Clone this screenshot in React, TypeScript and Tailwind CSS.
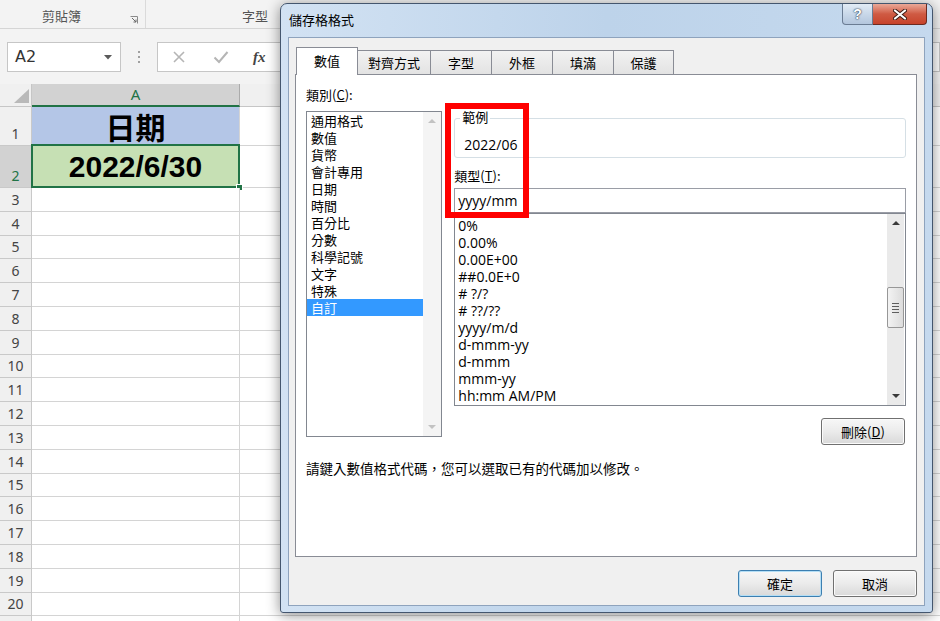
import React from 'react'

const categories = ['通用格式', '數值', '貨幣', '會計專用', '日期', '時間', '百分比', '分數', '科學記號', '文字', '特殊', '自訂']
const formats = ['0%', '0.00%', '0.00E+00', '##0.0E+0', '# ?/?', '# ??/??', 'yyyy/m/d', 'd-mmm-yy', 'd-mmm', 'mmm-yy', 'hh:mm AM/PM']
const tabs = [
  { label: '數值', w: 'w-[62px]', active: true },
  { label: '對齊方式', w: 'w-[74px]' },
  { label: '字型', w: 'w-[62px]' },
  { label: '外框', w: 'w-[62px]' },
  { label: '填滿', w: 'w-[62px]' },
  { label: '保護', w: 'w-[61px]' },
]
const emptyRows = Array.from({ length: 18 }, (_, i) => i + 3)

function Arrow({ up, color }: { up?: boolean; color: string }) {
  return (
    <svg width="8" height="5" viewBox="0 0 8 5">
      <path d={up ? 'M0 5 L4 1 L8 5 Z' : 'M0 0 L8 0 L4 4 Z'} fill={color} />
    </svg>
  )
}

function GridRow({ n, h, head, cell, children }: { n: number; h: string; head?: string; cell?: string; children?: React.ReactNode }) {
  return (
    <div className={`flex shrink-0 ${h}`}>
      <div className={`w-[32px] flex items-end justify-center pb-[2px] border-r border-b border-[#c9c9c9] text-[14px] leading-[18px] ${head ?? 'bg-[#f0f0f0] text-[#444]'}`}>
        {n}
      </div>
      <div className={`w-[208px] relative border-r border-b border-[#d4d4d4] ${cell ?? 'bg-white'}`}>{children}</div>
      <div className="flex-1 border-b border-[#d4d4d4] bg-white" />
    </div>
  )
}

function Excel() {
  return (
    <div className="flex flex-col h-full bg-white font-['Noto_Sans','Noto_Sans_CJK_TC',sans-serif]">
      {/* Ribbon group labels */}
      <div className="h-[29px] shrink-0 flex bg-[#f3f3f3] border-b border-[#d5d5d5] text-[13px] text-[#555] font-['Noto_Sans_CJK_TC',sans-serif]">
        <div className="w-[146px] flex items-start border-r border-[#dadada] pt-[7px]">
          <span className="ml-[42px] leading-[18px]">剪貼簿</span>
          <svg className="ml-auto mr-[7px] mt-[9px]" width="8" height="8" viewBox="0 0 8 8">
            <path d="M0.5 0.5 H7.5 V7.5" fill="none" stroke="#8a8a8a" />
            <path d="M2 2 L6 6 M6 3.5 V6 H3.5" fill="none" stroke="#6a6a6a" />
          </svg>
        </div>
        <div className="w-[218px] flex justify-center pt-[7px]">
          <span className="leading-[18px]">字型</span>
        </div>
      </div>

      {/* Formula bar */}
      <div className="h-[55px] shrink-0 flex items-start pt-[13px] bg-[#f3f3f3]">
        <div className="ml-[7px] w-[114px] h-[30px] flex items-center pl-[7px] pr-[8px] bg-white border border-[#c6c6c6]">
          <span className="text-[16px] text-[#333] font-['DejaVu_Sans',sans-serif]">A2</span>
          <svg className="ml-auto" width="8" height="5" viewBox="0 0 8 5">
            <path d="M0 0 H8 L4 4.5 Z" fill="#5a5a5a" />
          </svg>
        </div>
        <div className="w-[36px] h-[30px] flex flex-col items-center justify-center gap-[3px]">
          <span className="w-[2px] h-[2px] bg-[#a0a0a0]" />
          <span className="w-[2px] h-[2px] bg-[#a0a0a0]" />
          <span className="w-[2px] h-[2px] bg-[#a0a0a0]" />
        </div>
        <div className="flex-1 h-[30px] flex items-center bg-white border border-[#c6c6c6]">
          <svg className="ml-[14px]" width="14" height="14" viewBox="0 0 14 14">
            <path d="M2 2 L12 12 M12 2 L2 12" stroke="#b5b5b5" strokeWidth="1.6" />
          </svg>
          <svg className="ml-[27px]" width="16" height="14" viewBox="0 0 16 14">
            <path d="M1.5 7.5 L6 12 L14.5 2" fill="none" stroke="#b5b5b5" strokeWidth="2" />
          </svg>
          <span className="ml-[24px] text-[15px] italic font-bold text-[#444] font-['Liberation_Serif',serif]">fx</span>
        </div>
      </div>

      {/* Column header */}
      <div className="h-[23px] shrink-0 flex bg-[#f0f0f0]">
        <div className="w-[32px] flex items-end justify-end pr-[2px] pb-[3px] border-r border-b border-[#c6c6c6]">
          <svg width="15" height="14" viewBox="0 0 15 14">
            <path d="M15 0 V14 H0 Z" fill="#b9b9b9" />
          </svg>
        </div>
        <div className="w-[208px] flex items-center justify-center bg-[#d2d2d2] border-r border-[#ababab] border-b-2 border-b-[#217346] text-[15px] text-[#217346]">
          A
        </div>
        <div className="flex-1 border-b border-[#c6c6c6]" />
      </div>

      <GridRow n={1} h="h-[39px]" cell="bg-[#b4c6e7]">
        <div className="h-full flex items-center justify-center text-[30px] font-bold text-black font-['Noto_Sans_CJK_TC',sans-serif]">
          日期
        </div>
      </GridRow>
      <GridRow n={2} h="h-[42px]" head="bg-[#d2d2d2] text-[#217346]" cell="bg-[#c6e0b4]">
        <div className="h-full flex items-center justify-center text-[30px] font-bold text-black font-['Liberation_Sans',sans-serif]">
          2022/6/30
        </div>
        <div className="absolute -left-px -top-[2px] -right-px -bottom-px border-2 border-[#217346]" />
        <div className="absolute -right-[4px] -bottom-[4px] w-[7px] h-[7px] bg-[#217346] border border-white" />
      </GridRow>
      {emptyRows.map((n) => (
        <GridRow key={n} n={n} h="h-[23.8px]" />
      ))}
      <div className="flex-1 flex">
        <div className="w-[32px] bg-[#f0f0f0] border-r border-[#c9c9c9]" />
        <div className="w-[208px] border-r border-[#d4d4d4]" />
      </div>
    </div>
  )
}

function Button({ children, focused }: { children: React.ReactNode; focused?: boolean }) {
  return (
    <div
      className={`w-[84px] h-[27px] flex items-center justify-center rounded-[3px] border bg-gradient-to-b from-[#f7f7f7] via-[#ebebeb] to-[#d9d9d9] text-[13px] text-black ${
        focused ? 'border-[#3c7fb1] shadow-[inset_0_0_0_1px_#b4def5]' : 'border-[#707070] shadow-[inset_0_0_0_1px_#fbfbfb]'
      }`}
    >
      {children}
    </div>
  )
}

function Dialog() {
  return (
    <div className="absolute left-[280px] top-[3px] w-[653px] h-[610px] flex flex-col rounded-t-[7px] rounded-b-[3px] border border-[#44566e] bg-gradient-to-r from-[#d2e2f3] via-[#bdd3ea] to-[#c5d9ee] shadow-[0_2px_14px_rgba(0,0,0,0.45)] font-['Noto_Sans_CJK_TC',sans-serif]">
      {/* Title bar */}
      <div className="h-[33px] shrink-0 flex items-start">
        <div className="pl-[8px] pt-[6px] text-[13px] leading-[20px] text-black">儲存格格式</div>
        <div className="ml-auto mr-[5px] flex">
          <div className="w-[31px] h-[21px] flex items-center justify-center rounded-bl-[4px] border border-t-0 border-[#6a7c93] bg-gradient-to-b from-[#e2ebf5] via-[#c9d8e9] to-[#b3c6dd] text-[14px] font-bold text-white [text-shadow:0_0_2px_#27364a,0_0_1px_#27364a] font-['Liberation_Sans',sans-serif]">
            ?
          </div>
          <div className="w-[54px] h-[21px] flex items-center justify-center rounded-br-[4px] border border-t-0 border-l-0 border-[#6b2a20] bg-gradient-to-b from-[#e9a898] via-[#cf5a43] to-[#c7432b]">
            <svg width="14" height="11" viewBox="0 0 14 11">
              <path d="M2 1.5 L12 9.5 M12 1.5 L2 9.5" stroke="#3b1a14" strokeWidth="4" strokeLinecap="round" />
              <path d="M2 1.5 L12 9.5 M12 1.5 L2 9.5" stroke="#ffffff" strokeWidth="2.2" strokeLinecap="round" />
            </svg>
          </div>
        </div>
      </div>

      {/* Client area */}
      <div className="mx-[7px] mb-[6px] flex-1 flex flex-col px-[6px] pt-[9px] border border-[#8ea3bd] bg-[#f0f0f0] text-[13px] text-black">
        {/* Tabs */}
        <div className="h-[27px] flex items-end pl-px">
          {tabs.map((t) =>
            t.active ? (
              <div
                key={t.label}
                className={`${t.w} h-[28px] -mb-px relative z-10 flex items-center justify-center pb-[2px] bg-white border border-b-0 border-[#898c95]`}
              >
                {t.label}
              </div>
            ) : (
              <div
                key={t.label}
                className={`${t.w} h-[24px] -ml-px flex items-center justify-center bg-gradient-to-b from-[#f2f2f2] to-[#e3e3e3] border border-b-0 border-[#898c95]`}
              >
                {t.label}
              </div>
            )
          )}
        </div>

        {/* Panel */}
        <div className="relative w-[622px] h-[483px] px-[10px] bg-white border border-[#898c95]">
          <div className="flex items-start">
            {/* Category */}
            <div className="w-[137px] flex flex-col">
              <div className="mt-[12px] leading-[16px]">
                類別(<span className="underline">C</span>):
              </div>
              <div className="mt-[8px] h-[326px] flex border border-[#828790] bg-white">
                <div className="flex-1 flex flex-col">
                  {categories.map((c) => (
                    <div
                      key={c}
                      className={`h-[17px] leading-[17px] pl-[4px] ${c === '自訂' ? 'bg-[#3399ff] text-white' : ''}`}
                    >
                      {c}
                    </div>
                  ))}
                </div>
                <div className="w-[18px] flex flex-col items-center justify-between py-[6px] bg-[#f4f4f4]">
                  <Arrow up color="#c2c2c2" />
                  <Arrow color="#c2c2c2" />
                </div>
              </div>
            </div>

            {/* Right side */}
            <div className="ml-[12px] w-[454px] flex flex-col">
              <div className="mt-[43px] h-[40px] relative rounded-[3px] border border-[#d5dfe5] pl-[9px] pt-[16px]">
                <span className="absolute -top-[10px] left-[5px] px-[2px] bg-white leading-[16px]">範例</span>
                <span className="leading-[18px] text-[14px] font-['Open_Sans',sans-serif]">2022/06</span>
              </div>
              <div className="mt-[10px] leading-[16px]">
                類型(<span className="underline">T</span>):
              </div>
              <div className="mt-[4px] h-[25px] flex items-center pl-[3px] border border-[#9a9da6] bg-white text-[14px] font-['Open_Sans',sans-serif]">
                yyyy/mm
              </div>
              <div className="h-[193px] flex border border-[#828790] bg-white">
                <div className="flex-1 flex flex-col pt-[3px] pl-[3px] text-[14px] font-['Open_Sans',sans-serif]">
                  {formats.map((f) => (
                    <div key={f} className="h-[17px] leading-[17px] whitespace-pre">
                      {f}
                    </div>
                  ))}
                </div>
                <div className="w-[17px] mr-px flex flex-col bg-[#eaeaea]">
                  <div className="h-[17px] flex items-center justify-center">
                    <Arrow up color="#3a3a3a" />
                  </div>
                  <div className="flex-1">
                    <div className="mt-[56px] h-[41px] flex flex-col items-center justify-center gap-[2px] rounded-[2px] border border-[#979797] bg-gradient-to-r from-[#f3f3f3] to-[#dcdcdc]">
                      <span className="w-[7px] h-px bg-[#5e5e5e]" />
                      <span className="w-[7px] h-px bg-[#5e5e5e]" />
                      <span className="w-[7px] h-px bg-[#5e5e5e]" />
                      <span className="w-[7px] h-px bg-[#5e5e5e]" />
                    </div>
                  </div>
                  <div className="h-[17px] flex items-center justify-center">
                    <Arrow color="#3a3a3a" />
                  </div>
                </div>
              </div>
              <div className="mt-[12px] self-end mr-px">
                <Button>
                  刪除(<span className="underline">D</span>)
                </Button>
              </div>
            </div>
          </div>

          <div className="mt-[15px] leading-[16px] text-[13.5px]">請鍵入數值格式代碼，您可以選取已有的代碼加以修改。</div>

          {/* Red annotation */}
          <div className="absolute left-[149px] top-[28px] w-[84px] h-[115px] border-[6px] border-[#ff0000]" />
        </div>

        {/* Footer buttons */}
        <div className="mt-[13px] flex justify-end gap-[11px] mr-px">
          <Button focused>確定</Button>
          <Button>取消</Button>
        </div>
      </div>
    </div>
  )
}

export default function App() {
  return (
    <div className="relative w-[940px] h-[621px] overflow-hidden bg-white">
      <Excel />
      <Dialog />
    </div>
  )
}
